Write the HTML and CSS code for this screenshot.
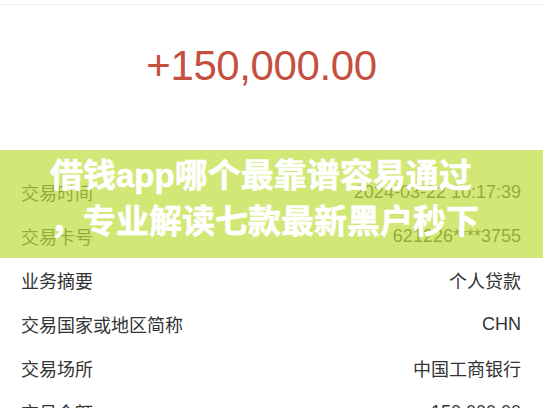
FILE: index.html
```html
<!DOCTYPE html>
<html lang="zh-CN">
<head>
  <meta charset="UTF-8">
  <meta name="viewport" content="width=device-width, initial-scale=1.0">
  <title>交易详情</title>
  <link rel="stylesheet" href="styles.css">
</head>
<body>
<div class="page">
  <div class="topbar"></div>

  <div class="amount">+150,000.00</div>

  <div class="details">
    <div class="row"><span>交易时间</span><span>2024-03-22 10:17:39</span></div>
    <div class="row"><span>交易卡号</span><span>621226****3755</span></div>
    <div class="row"><span>业务摘要</span><span>个人贷款</span></div>
    <div class="row"><span>交易国家或地区简称</span><span>CHN</span></div>
    <div class="row"><span>交易场所</span><span>中国工商银行</span></div>
    <div class="row"><span>交易金额</span><span>150,000.00</span></div>
  </div>

  <div class="banner">
    <span class="banner-line">借钱app哪个最靠谱容易通过</span>
    <span class="banner-line">，专业解读七款最新黑户秒下</span>
  </div>
</div>
</body>
</html>
```

FILE: styles.css
```css
:root {
  --text-color: #333333;
  --amount-color: #c4503f;
  --line-color: #ececec;
  --banner-color: rgba(190, 222, 60, 0.7);
}

body {
  margin: 0;
  background-color: #ffffff;
  color: var(--text-color);
  font-family: "Liberation Sans", "Noto Sans CJK SC", sans-serif;
}

.page {
  position: relative;
  height: 408px;
  overflow: hidden;
}

.topbar {
  height: 4px;
  border-bottom: 1px solid var(--line-color);
}

.amount {
  padding: 40px 20px 83px 0;
  font-size: 42px;
  line-height: 42px;
  text-align: center;
  letter-spacing: -0.4px;
  color: var(--amount-color);
}

.details {
  display: flex;
  flex-direction: column;
}

.row {
  display: flex;
  justify-content: space-between;
  align-items: center;
  height: 44px;
  padding: 0 22px 0 21px;
  font-size: 18px;
}

.banner {
  position: absolute;
  top: 150px;
  left: 0;
  right: 0;
  height: 108px;
  box-sizing: border-box;
  padding: 3px 0 0 50px;
  background-color: var(--banner-color);
  color: #ffffff;
  font-weight: bold;
  font-size: 33px;
  line-height: 46px;
  -webkit-text-stroke: 0.6px #ffffff;
}

.banner-line {
  display: block;
  white-space: nowrap;
}
```
